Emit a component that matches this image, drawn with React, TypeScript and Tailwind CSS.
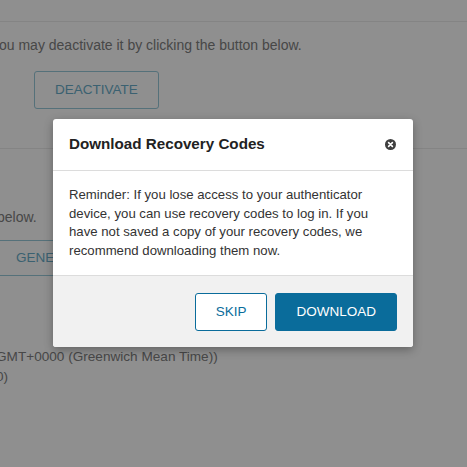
import React from "react";

export default function App() {
  return (
    <div className="relative h-[467px] w-[467px] overflow-hidden bg-white font-['Liberation_Sans',Arial,sans-serif]">
      {/* underlying page */}
      <div className="flex flex-col whitespace-nowrap">
        <div className="h-[22px] border-b border-[#ececec]" />
        <p className="mt-[13px] ml-[-8px] text-[14px] leading-[20px] text-[#808080]">
          you may deactivate it by clicking the button below.
        </p>
        <div className="mt-[16px] ml-[34px] flex">
          <button className="h-[38px] rounded-[3px] border border-[#98c9da] px-5 text-[13.5px] text-[#6aaec9]">
            DEACTIVATE
          </button>
        </div>
        <div className="mt-[39px] border-t border-[#ececec]" />
        <p className="mt-[58px] ml-[-3px] text-[14px] leading-[20px] text-[#808080]">below.</p>
        <div className="mt-[13px] ml-[-5px] flex">
          <button className="h-[36px] rounded-[3px] border border-[#98c9da] px-5 text-[13.5px] text-[#6aaec9]">
            GENERATE
          </button>
        </div>
        <div className="mt-[71px] ml-[-4px] text-[13.6px] leading-[20px] text-[#808080]">
          <p>GMT+0000 (Greenwich Mean Time))</p>
          <p>0)</p>
        </div>
      </div>

      {/* overlay */}
      <div className="absolute inset-0 bg-black/[0.44]" />

      {/* modal */}
      <div className="absolute left-[53px] top-[119px] w-[360px] overflow-hidden rounded-[3px] bg-white shadow-[0_3px_10px_rgba(0,0,0,0.3)]">
        <div className="flex h-[52px] items-center justify-between border-b border-[#dcdcdc] pl-4 pr-[17px]">
          <h2 className="text-[15.2px] font-bold text-[#222]">Download Recovery Codes</h2>
          <svg width="11" height="11" viewBox="0 0 11 11" aria-label="Close">
            <circle cx="5.5" cy="5.5" r="5.5" fill="#3f3f3f" />
            <path d="M3.6 3.6 L7.4 7.4 M7.4 3.6 L3.6 7.4" stroke="#fff" strokeWidth="1.6" strokeLinecap="round" />
          </svg>
        </div>
        <div className="pl-4 pr-5 py-[15px] text-[13.2px] leading-[18.6px] text-[#333]">
          Reminder: If you lose access to your authenticator device, you can use recovery codes to log in. If you
          have not saved a copy of your recovery codes, we recommend downloading them now.
        </div>
        <div className="flex justify-end gap-2 border-t border-[#dcdcdc] bg-[#f1f1f1] px-4 pt-[17px] pb-4">
          <button className="h-[38px] rounded-[3px] border border-[#0a6c9b] bg-white px-5 text-[13.5px] text-[#0a6c9b]">
            SKIP
          </button>
          <button className="h-[38px] rounded-[3px] border border-[#0a6c9b] bg-[#0a6c9b] px-5 text-[13.5px] text-white">
            DOWNLOAD
          </button>
        </div>
      </div>
    </div>
  );
}
